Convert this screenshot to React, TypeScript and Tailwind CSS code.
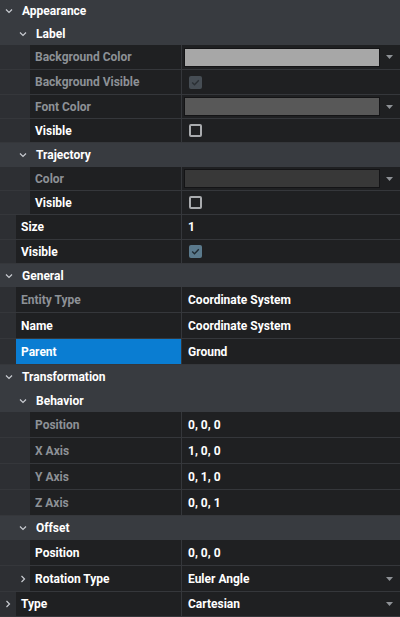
import React from "react";

type Row =
  | { kind: "group"; label: string; level: number; h: string }
  | {
      kind: "prop";
      label: string;
      level: number;
      h: string;
      muted?: boolean;
      selected?: boolean;
      expander?: boolean;
      value?: React.ReactNode;
    };

function Chevron({ open }: { open: boolean }) {
  return (
    <svg width="8" height="8" viewBox="0 0 8 8" className="shrink-0">
      {open ? (
        <path d="M1 2.5 L4 5.5 L7 2.5" fill="none" stroke="#c9ccd1" strokeWidth="1.2" />
      ) : (
        <path d="M2.5 1 L5.5 4 L2.5 7" fill="none" stroke="#c9ccd1" strokeWidth="1.2" />
      )}
    </svg>
  );
}

function DropArrow() {
  return (
    <svg width="7" height="4" viewBox="0 0 7 4" className="absolute right-[7px] top-1/2 -translate-y-1/2">
      <path d="M0 0 L7 0 L3.5 4 Z" fill="#8e9196" />
    </svg>
  );
}

function Swatch({ color }: { color: string }) {
  return (
    <div className="relative flex h-full w-full items-center pl-[2px] pr-[20px]">
      <div className="h-[19px] w-full border border-[#141416]" style={{ backgroundColor: color }} />
      <DropArrow />
    </div>
  );
}

function Check({ state }: { state: "off" | "on" | "disabled" }) {
  if (state === "off") {
    return <div className="ml-[7px] h-[13px] w-[13px] rounded-[2px] border-2 border-[#a9abae]" />;
  }
  const bg = state === "on" ? "bg-[#5b7a8d]" : "bg-[#464d54]";
  const stroke = state === "on" ? "#1f2a32" : "#2a2f34";
  return (
    <div className={`ml-[7px] flex h-[13px] w-[13px] items-center justify-center rounded-[2px] ${bg}`}>
      <svg width="9" height="9" viewBox="0 0 9 9">
        <path d="M1.2 4.6 L3.5 6.8 L7.8 2.2" fill="none" stroke={stroke} strokeWidth="1.4" />
      </svg>
    </div>
  );
}

function Text({ children }: { children: React.ReactNode }) {
  return <span className="pl-[6px] text-white">{children}</span>;
}

function Select({ children }: { children: React.ReactNode }) {
  return (
    <div className="relative flex h-full w-full items-center">
      <span className="pl-[6px] text-white">{children}</span>
      <DropArrow />
    </div>
  );
}

const rows: Row[] = [
  { kind: "group", label: "Appearance", level: 0, h: "h-[22px]" },
  { kind: "group", label: "Label", level: 1, h: "h-[23px]" },
  { kind: "prop", label: "Background Color", level: 1, h: "h-[25px]", muted: true, value: <Swatch color="#a7a7a7" /> },
  { kind: "prop", label: "Background Visible", level: 1, h: "h-[25px]", muted: true, value: <Check state="disabled" /> },
  { kind: "prop", label: "Font Color", level: 1, h: "h-[24px]", muted: true, value: <Swatch color="#585858" /> },
  { kind: "prop", label: "Visible", level: 1, h: "h-[24px]", value: <Check state="off" /> },
  { kind: "group", label: "Trajectory", level: 1, h: "h-[24px]" },
  { kind: "prop", label: "Color", level: 1, h: "h-[24px]", muted: true, value: <Swatch color="#383838" /> },
  { kind: "prop", label: "Visible", level: 1, h: "h-[24px]", value: <Check state="off" /> },
  { kind: "prop", label: "Size", level: 0, h: "h-[25px]", value: <Text>1</Text> },
  { kind: "prop", label: "Visible", level: 0, h: "h-[24px]", value: <Check state="on" /> },
  { kind: "group", label: "General", level: 0, h: "h-[23px]" },
  { kind: "prop", label: "Entity Type", level: 0, h: "h-[26px]", muted: true, value: <Text>Coordinate System</Text> },
  { kind: "prop", label: "Name", level: 0, h: "h-[26px]", value: <Text>Coordinate System</Text> },
  { kind: "prop", label: "Parent", level: 0, h: "h-[26px]", selected: true, value: <Text>Ground</Text> },
  { kind: "group", label: "Transformation", level: 0, h: "h-[24px]" },
  { kind: "group", label: "Behavior", level: 1, h: "h-[23px]" },
  { kind: "prop", label: "Position", level: 1, h: "h-[26px]", muted: true, value: <Text>0, 0, 0</Text> },
  { kind: "prop", label: "X Axis", level: 1, h: "h-[26px]", muted: true, value: <Text>1, 0, 0</Text> },
  { kind: "prop", label: "Y Axis", level: 1, h: "h-[26px]", muted: true, value: <Text>0, 1, 0</Text> },
  { kind: "prop", label: "Z Axis", level: 1, h: "h-[26px]", muted: true, value: <Text>0, 0, 1</Text> },
  { kind: "group", label: "Offset", level: 1, h: "h-[24px]" },
  { kind: "prop", label: "Position", level: 1, h: "h-[26px]", value: <Text>0, 0, 0</Text> },
  { kind: "prop", label: "Rotation Type", level: 1, h: "h-[26px]", expander: true, value: <Select>Euler Angle</Select> },
  { kind: "prop", label: "Type", level: 0, h: "h-[25px]", expander: true, value: <Select>Cartesian</Select> },
];

export default function App() {
  return (
    <div
      className="w-[400px] h-[617px] overflow-hidden bg-[#2d2f33] text-[12px] font-bold leading-none"
      style={{ fontFamily: "Roboto, 'Liberation Sans', sans-serif" }}
    >
      {rows.map((row, i) => {
        if (row.kind === "group") {
          return (
            <div key={i} className={`flex items-center bg-[#383b40] ${row.h}`}>
              <div className={`flex items-center ${row.level === 0 ? "w-[22px] pl-[5px]" : "w-[36px] pl-[19px]"}`}>
                <Chevron open />
              </div>
              <span className="text-white">{row.label}</span>
            </div>
          );
        }
        const gutter = row.level === 0 ? "w-[16px]" : "w-[30px]";
        return (
          <div key={i} className={`flex border-b border-[#35373b] ${row.h}`}>
            <div className={`flex shrink-0 items-center ${gutter} ${row.level === 0 ? "pl-[4px]" : "pl-[19px]"}`}>
              {row.expander && <Chevron open={false} />}
            </div>
            <div
              className={`flex flex-1 items-center border-r border-[#35373b] pl-[5px] ${
                row.selected ? "bg-[#0a7dd2] text-white" : row.muted ? "bg-[#1f2022] text-[#8d9196]" : "bg-[#1f2022] text-white"
              }`}
            >
              {row.label}
            </div>
            <div className="flex w-[218px] shrink-0 items-center bg-[#1f2022]">{row.value}</div>
          </div>
        );
      })}
    </div>
  );
}
